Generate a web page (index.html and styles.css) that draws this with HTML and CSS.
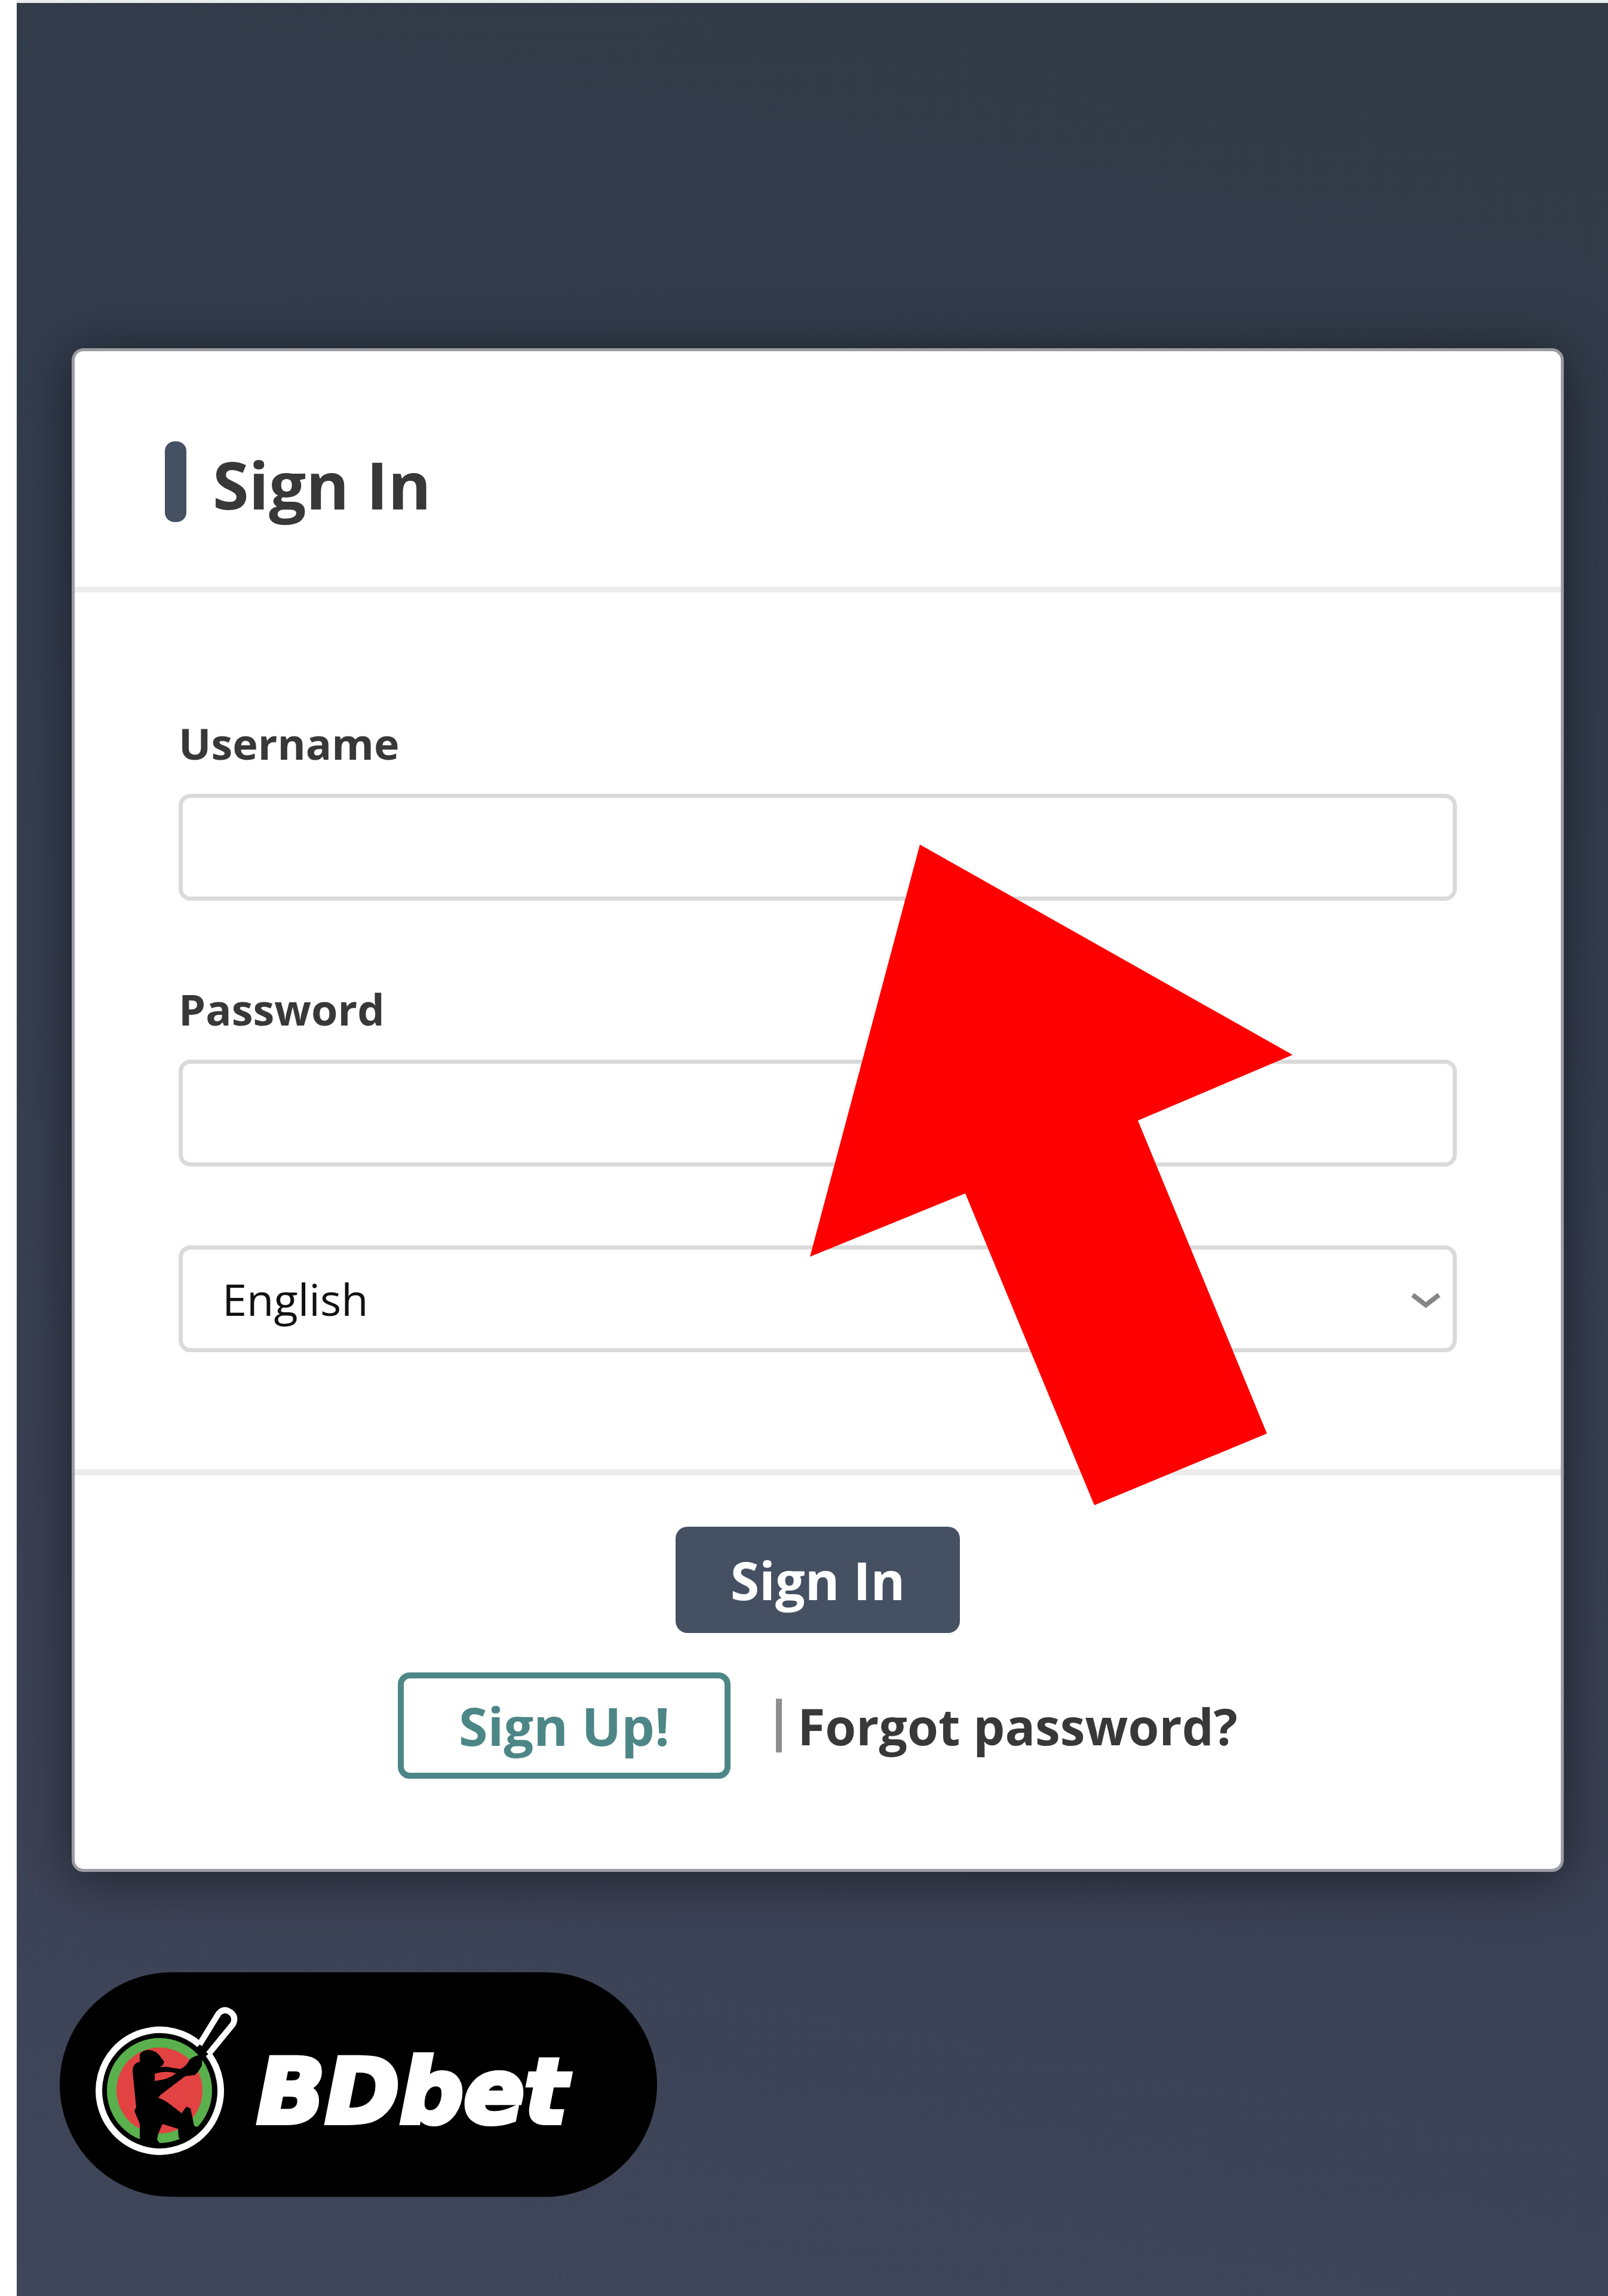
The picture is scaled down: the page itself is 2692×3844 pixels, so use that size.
FILE: index.html
```html
<!DOCTYPE html>
<html lang="en">
<head>
  <meta charset="UTF-8">
  <meta name="viewport" content="width=device-width, initial-scale=1.0">
  <title>BDbet - Sign In</title>
  <link rel="stylesheet" href="styles.css">
</head>
<body>
  <main class="page">
    <form class="card" onsubmit="return false">
      <header class="card-header">
        <span class="title-bar"></span>
        <h1>Sign In</h1>
      </header>

      <div class="card-body">
        <div class="field">
          <label for="username">Username</label>
          <input type="text" id="username" name="username">
        </div>
        <div class="field">
          <label for="password">Password</label>
          <input type="password" id="password" name="password">
        </div>
        <div class="select-wrap">
          <select id="language" name="language" aria-label="Language">
            <option>English</option>
          </select>
          <svg class="chevron" viewBox="0 0 52 30">
            <path d="M4 5 L26 22 L48 5" fill="none" stroke="#858585" stroke-width="8"/>
          </svg>
        </div>
      </div>

      <footer class="card-footer">
        <button type="submit" class="btn btn-primary">Sign In</button>
        <div class="links">
          <button type="button" class="btn btn-outline">Sign Up!</button>
          <span class="divider"></span>
          <a href="#">Forgot password?</a>
        </div>
      </footer>

      <!-- pointer to the login fields -->
      <svg class="arrow" viewBox="0 0 808 1106">
        <polygon points="184,0 808,352 549,462 765,986 476,1106 260,584 0,690" fill="#ff0000"/>
      </svg>
    </form>

    <div class="brand">
      <svg class="brand-logo" viewBox="0 7 240 250">
        <!-- ring and bat -->
        <path d="M178 65 L210 13 Q219 3 230 11 Q240 19 234 31 L193 81" fill="none" stroke="#fff" stroke-width="10"/>
        <path d="M178 65 A102 102 0 1 0 193 81" fill="none" stroke="#fff" stroke-width="11"/>
        <circle cx="111" cy="142" r="88" fill="#5ab04c"/>
        <circle cx="111" cy="142" r="72" fill="#e24242"/>
        <path d="M168 73 L184 86 L190 77 L180 66 Z" fill="#000"/>
        <!-- batsman -->
        <path d="M78 82 Q82 74 93 74 Q104 75 110 82 L119 94 L116 100 L111 103
          Q124 101 132 104 L146 106 Q153 103 158 96 Q162 86 176 83 L184 82 Q182 90 182 100
          Q176 112 170 116 L154 118 L138 130 L112 150 L109 154
          Q120 158 130 166 L148 180 L156 169 L163 172 L169 201 L180 205 L172 214 L146 226
          L143 220 L142 206 L116 198 L109 214 L107 224 L114 234 Q96 235 78 228 L78 198 L69 176
          L72 170 L66 110 Q66 96 78 94 Z" fill="#000"/>
        <path d="M103 114 Q120 108 139 113 Q126 124 103 126 Z" fill="#e24242"/>
      </svg>
      <span class="brand-name">BDbet</span>
    </div>
  </main>
</body>
</html>
```

FILE: styles.css
```css
* {
  box-sizing: border-box;
}

body {
  margin: 0;
  padding-left: 28px;
  background-color: #fff;
  color: #383838;
  font-family: "Open Sans", "Noto Sans", sans-serif;
}

.page {
  min-height: 100vh;
  padding: 578px 74px 160px 92px;
  border-top: 5px solid #e7edec;
  background: linear-gradient(190deg, #323a46 0%, #333c4d 25%, #394052 65%, #40465a 100%);
}

.card {
  position: relative;
  border: 5px solid #9b9ca2;
  border-radius: 20px;
  background-color: #fff;
  box-shadow: 0 10px 90px rgba(0, 0, 0, 0.5);
}

.card-header {
  display: flex;
  align-items: center;
  gap: 44px;
  padding: 151px;
  padding-bottom: 108px;
  border-bottom: 10px solid #ececec;
}

.title-bar {
  width: 36px;
  height: 135px;
  border-radius: 16px;
  background-color: #465063;
}

.card-header h1 {
  margin: 0;
  padding-top: 8px;
  font-size: 110px;
  line-height: 127px;
}

.card-body {
  padding: 203px 174px 196px;
}

.field {
  display: flex;
  flex-direction: column;
  gap: 36px;
  margin-bottom: 132px;
}

label {
  font-size: 72px;
  font-weight: bold;
  line-height: 98px;
}

input,
select {
  width: 100%;
  height: 179px;
  border: 7px solid #dadada;
  border-radius: 20px;
  background-color: #fff;
  font-family: inherit;
  font-size: 72px;
}

select {
  padding: 0 66px;
  color: #111;
  font-size: 74px;
  appearance: none;
}

.select-wrap {
  position: relative;
}

.chevron {
  position: absolute;
  right: 26px;
  top: 78px;
  width: 52px;
}

.card-footer {
  display: flex;
  flex-direction: column;
  align-items: center;
  gap: 66px;
  padding: 86px 0 151px;
  border-top: 10px solid #ececec;
}

.links {
  display: flex;
  align-items: center;
}

.btn {
  height: 178px;
  padding: 0 92px;
  border: none;
  border-radius: 20px;
  font-family: inherit;
  font-size: 88px;
  font-weight: bold;
  cursor: pointer;
}

.btn-primary {
  background-color: #465063;
  color: #fff;
}

.btn-outline {
  border: 10px solid #4d8686;
  background-color: #fff;
  color: #4d8686;
}

.divider {
  width: 10px;
  height: 90px;
  margin: 0 26px 0 76px;
  background-color: #8e8e8e;
}

.links a {
  color: inherit;
  font-size: 84px;
  font-weight: bold;
  text-decoration: none;
}

.arrow {
  position: absolute;
  left: calc(50% - 13px);
  top: 826px;
  width: 808px;
}

.brand {
  display: inline-flex;
  align-items: center;
  height: 376px;
  margin: 168px 0 0 -20px;
  padding: 0 150px 0 56px;
  border-radius: 188px;
  background-color: #000;
  color: #fff;
}

.brand-logo {
  width: 240px;
  overflow: visible;
}

.brand-name {
  margin-left: 34px;
  padding-top: 24px;
  font-family: "DejaVu Sans", sans-serif;
  font-size: 150px;
  font-weight: bold;
  font-style: italic;
  -webkit-text-stroke: 8px #fff;
}
```
